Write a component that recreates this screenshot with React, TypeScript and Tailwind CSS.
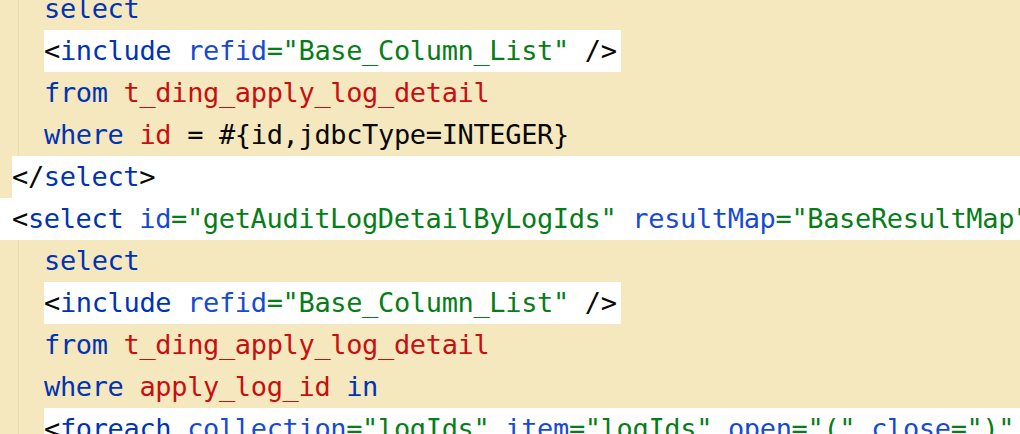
import type { ReactNode } from "react";

// token colours (IntelliJ light)
const K = ({ children }: { children: ReactNode }) => <span className="text-[#0033b3]">{children}</span>;
const A = ({ children }: { children: ReactNode }) => <span className="text-[#174ad4]">{children}</span>;
const S = ({ children }: { children: ReactNode }) => <span className="text-[#067d17]">{children}</span>;
const R = ({ children }: { children: ReactNode }) => <span className="text-[#c80f0f]">{children}</span>;

// one editor line; gutter holds the indent guide
function Row({
  children,
  mode = "sql",
}: {
  children: ReactNode;
  mode?: "sql" | "tagline" | "close" | "open" | "tail";
}) {
  if (mode === "open") {
    return <div className="h-[42px] bg-white pl-[12px] whitespace-pre">{children}</div>;
  }
  if (mode === "close") {
    return (
      <div className="flex h-[42px] bg-[#f5e8bf]">
        <div className="w-[12px] shrink-0" />
        <div className="flex-1 bg-white whitespace-pre">{children}</div>
      </div>
    );
  }
  return (
    <div className="flex h-[42px] bg-[#f5e8bf]">
      <div className="w-[44px] shrink-0 pl-[18px]">
        <div className="h-full border-l border-[#e9dcb2]" />
      </div>
      {mode === "tagline" ? (
        <div className="bg-white pr-[4px] whitespace-pre">{children}</div>
      ) : mode === "tail" ? (
        <div className="flex-1 bg-white whitespace-pre">{children}</div>
      ) : (
        <div className="whitespace-pre">{children}</div>
      )}
    </div>
  );
}

export default function App() {
  return (
    <div className="h-[434px] w-[1020px] overflow-hidden bg-[#f5e8bf] font-['DejaVu_Sans_Mono',monospace] text-[27px] leading-[42px] tracking-[-0.35px] text-[#080808]">
      <div className="-mt-[12px]">
        <Row>
          <K>select</K>
        </Row>
        <Row mode="tagline">
          {"<"}
          <K>include</K> <A>refid</A>
          <S>="Base_Column_List"</S> {"/>"}
        </Row>
        <Row>
          <K>from</K> <R>t_ding_apply_log_detail</R>
        </Row>
        <Row>
          <K>where</K> <R>id</R> {"= #{id,jdbcType=INTEGER}"}
        </Row>
        <Row mode="close">
          {"</"}
          <K>select</K>
          {">"}
        </Row>
        <Row mode="open">
          {"<"}
          <K>select</K> <A>id</A>
          <S>="getAuditLogDetailByLogIds"</S> <A>resultMap</A>
          <S>="BaseResultMap"</S>
        </Row>
        <Row>
          <K>select</K>
        </Row>
        <Row mode="tagline">
          {"<"}
          <K>include</K> <A>refid</A>
          <S>="Base_Column_List"</S> {"/>"}
        </Row>
        <Row>
          <K>from</K> <R>t_ding_apply_log_detail</R>
        </Row>
        <Row>
          <K>where</K> <R>apply_log_id</R> <K>in</K>
        </Row>
        <Row mode="tail">
          {"<"}
          <K>foreach</K> <A>collection</A>
          <S>="logIds"</S> <A>item</A>
          <S>="logIds"</S> <A>open</A>
          <S>="("</S> <A>close</A>
          <S>=")"</S>
        </Row>
      </div>
    </div>
  );
}
